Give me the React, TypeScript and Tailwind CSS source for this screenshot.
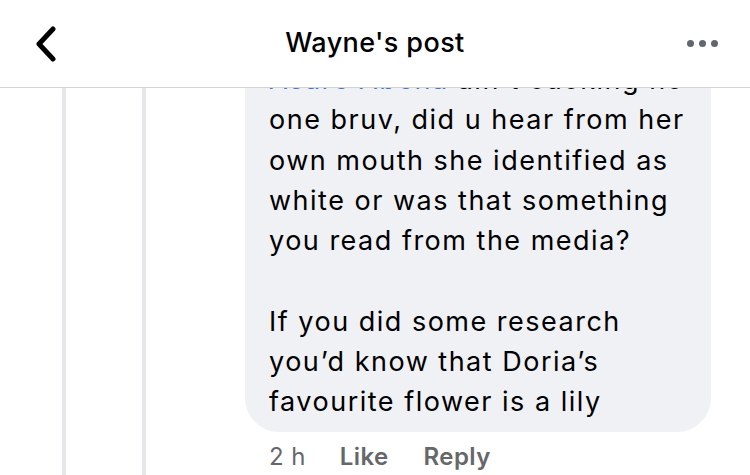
import React from "react";

export default function App() {
  return (
    <div
      className="relative w-[750px] h-[475px] overflow-hidden bg-white"
      style={{ fontFamily: "Inter, 'Liberation Sans', sans-serif" }}
    >
      <div className="relative z-10 h-[88px] bg-white border-b border-[#d4d4d6] flex items-center">
        <div className="w-[120px] pl-[34px] flex items-center">
          <svg width="26" height="36" viewBox="0 0 26 36">
            <polyline
              points="19,3 5,18 19,33"
              fill="none"
              stroke="#000"
              strokeWidth="5"
              strokeLinecap="round"
              strokeLinejoin="round"
            />
          </svg>
        </div>
        <div className="flex-1 text-center text-[27px] font-medium text-black tracking-[0.4px]">
          Wayne's post
        </div>
        <div className="w-[120px] flex justify-end pr-[32px] gap-[5px] items-center">
          <span className="w-[7px] h-[7px] rounded-full bg-[#606770]" />
          <span className="w-[7px] h-[7px] rounded-full bg-[#606770]" />
          <span className="w-[7px] h-[7px] rounded-full bg-[#606770]" />
        </div>
      </div>
      <div className="flex -mt-[37px] h-[500px]">
        <div className="w-[62px]" />
        <div className="w-[4px] bg-[#e4e6eb]" />
        <div className="w-[76px]" />
        <div className="w-[4px] bg-[#e4e6eb]" />
        <div className="w-[99px]" />
        <div className="flex flex-col">
          <div className="w-[466px] bg-[#f0f1f5] rounded-[34px] pl-[24px] pr-[8px] pt-[9px] pb-[9px] text-[27px] leading-[40.3px] tracking-[1.5px] text-black whitespace-nowrap">
            <div>
              <span className="text-[#3b76d9]">Asare Abena</span> ain't cucking no
            </div>
            <div>one bruv, did u hear from her</div>
            <div>own mouth she identified as</div>
            <div>white or was that something</div>
            <div>you read from the media?</div>
            <div>&nbsp;</div>
            <div>If you did some research</div>
            <div>you’d know that Doria’s</div>
            <div>favourite flower is a lily</div>
          </div>
          <div className="flex items-center pl-[24px] mt-[10px] text-[24px] leading-[30px] tracking-[0.4px] text-[#65676b]">
            <span>2 h</span>
            <span className="ml-[34px] font-semibold">Like</span>
            <span className="ml-[35px] font-semibold">Reply</span>
          </div>
        </div>
      </div>
    </div>
  );
}
